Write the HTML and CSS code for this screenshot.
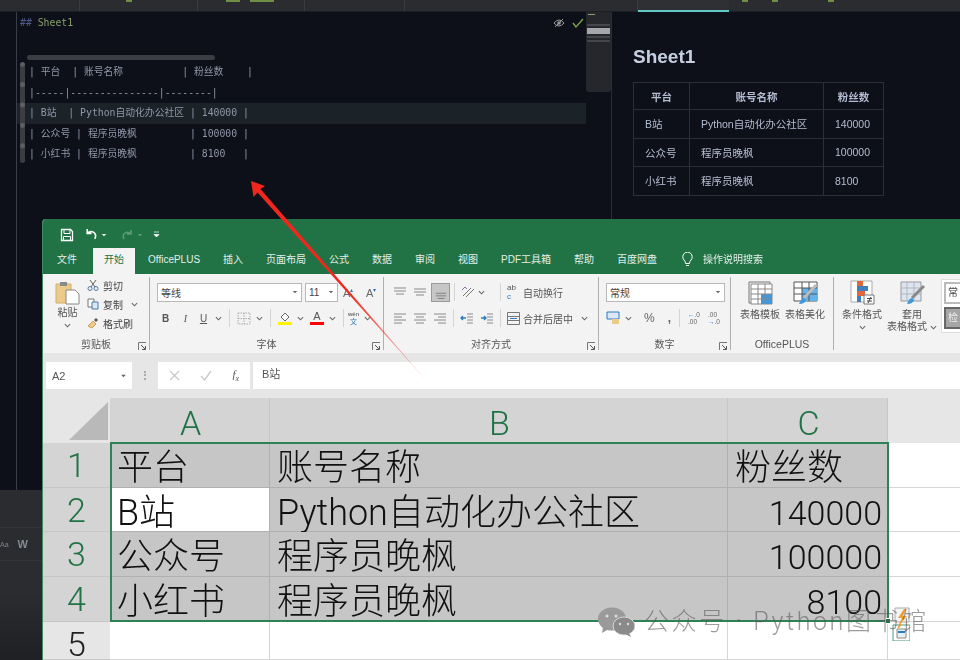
FILE: index.html
```html
<!DOCTYPE html>
<html lang="en">
<head>
  <meta charset="UTF-8">
  <meta name="viewport" content="width=device-width, initial-scale=1.0">
  <title>Sheet1</title>
  <link rel="stylesheet" href="styles.css">
</head>
<body>

  <!-- Icons used more than once -->
  <svg class="defs" width="0" height="0">
    <symbol id="chev" viewBox="0 0 8 5"><path d="M1 1l3 3 3-3" fill="none" stroke="#666" stroke-width="1.2"/></symbol>
    <symbol id="tri" viewBox="0 0 8 5"><path d="M1 1h6L4 4z" fill="#666"/></symbol>
    <symbol id="expand" viewBox="0 0 9 9"><path d="M.5 8V.5H8" fill="none" stroke="#777"/><path d="M3 3l4 4M7.5 4v3.5H4" fill="none" stroke="#555"/></symbol>
    <symbol id="al-left" viewBox="0 0 14 12"><path d="M1 2h12M1 5h8M1 8h12M1 11h8" stroke="#8a8a8a"/></symbol>
    <symbol id="al-mid" viewBox="0 0 14 12"><path d="M1 2h12M3 5h8M1 8h12M3 11h8" stroke="#8a8a8a"/></symbol>
    <symbol id="al-right" viewBox="0 0 14 12"><path d="M1 2h12M5 5h8M1 8h12M5 11h8" stroke="#8a8a8a"/></symbol>
  </svg>

  <!-- Dark editor behind the spreadsheet -->
  <div class="topbar">
    <div class="toptab t1"></div>
    <div class="toptab t2"><i class="gbit"></i></div>
    <div class="toptab t3"><i class="gbit wide"></i><i class="gbit wider"></i></div>
    <div class="toptab t4"></div>
    <div class="toptab t5"></div>
    <div class="toptab active"></div>
    <div class="toptab t7"><i class="gbit"></i><i class="gbit"></i><i class="gbit"></i></div>
  </div>

  <div class="panes">
    <div class="editor">
      <div class="gutter"></div>
      <div class="code">
        <pre class="line"><span class="hash">##</span> <span class="head">Sheet1</span></pre>
        <div class="tablebar"></div>
        <div class="sidebar"></div>
        <div class="mdtable">
          <pre class="line">| 平台  | 账号名称          | 粉丝数    |</pre>
          <pre class="line">|-----|---------------|--------|</pre>
          <pre class="line cur">| B站  | Python自动化办公社区 | 140000 |</pre>
          <pre class="line">| 公众号 | 程序员晚枫         | 100000 |</pre>
          <pre class="line">| 小红书 | 程序员晚枫         | 8100   |</pre>
        </div>
        <div class="tools">
          <svg width="12" height="10" viewBox="0 0 12 10"><path d="M1 5q5-6 10 0q-5 6-10 0z" fill="none" stroke="#9a9a9a"/><circle cx="6" cy="5" r="1.8" fill="#9a9a9a"/><path d="M2 9l8-8" stroke="#9a9a9a"/></svg>
          <svg width="12" height="10" viewBox="0 0 12 10"><path d="M1 5l3 4 7-8" fill="none" stroke="#7fa64c" stroke-width="1.3"/></svg>
        </div>
      </div>
      <div class="minimap">
        <i class="mm-green"></i><i></i><i class="mm-on"></i><i></i><i></i>
      </div>
    </div>

    <div class="preview">
      <h1>Sheet1</h1>
      <table>
        <tr><th>平台</th><th>账号名称</th><th>粉丝数</th></tr>
        <tr><td>B站</td><td>Python自动化办公社区</td><td>140000</td></tr>
        <tr><td>公众号</td><td>程序员晚枫</td><td>100000</td></tr>
        <tr><td>小红书</td><td>程序员晚枫</td><td>8100</td></tr>
      </table>
    </div>
  </div>

  <div class="bottompanel">
    <div class="findrow"><span class="aa">Aa</span><b>W</b></div>
  </div>

  <!-- Excel window, lies over the editor -->
  <div class="excel">
    <div class="titlebar">
      <svg width="14" height="14" viewBox="0 0 14 14"><path d="M1.5 1.5h9l2 2v9h-11z" fill="none" stroke="#fff" stroke-width="1.3"/><path d="M4 1.5h6v4H4zM3.5 8.5h7v4h-7z" fill="none" stroke="#fff"/></svg>
      <svg class="undo" width="14" height="13" viewBox="0 0 13 12"><path d="M3 1v4h4M3 5q3-3 6-1t1 6" fill="none" stroke="#fff" stroke-width="1.5"/></svg>
      <svg class="small" width="6" height="4" viewBox="0 0 8 5"><path d="M1 1h6L4 4z" fill="#fff"/></svg>
      <svg class="redo" width="13" height="12" viewBox="0 0 13 12"><path d="M10 1v4H6M10 5q-3-3-6-1t-1 6" fill="none" stroke="#5d9b7c" stroke-width="1.5"/></svg>
      <svg class="small" width="6" height="4" viewBox="0 0 8 5"><path d="M1 1h6L4 4z" fill="#5d9b7c"/></svg>
      <svg class="custom" width="7" height="7" viewBox="0 0 7 7"><path d="M1 1h5M1 3.5h5L3.5 6z" fill="#fff" stroke="#fff" stroke-width=".7"/></svg>
    </div>

    <div class="tabs">
      <span class="tab first">文件</span>
      <span class="tab on">开始</span>
      <span class="tab">OfficePLUS</span>
      <span class="tab">插入</span>
      <span class="tab">页面布局</span>
      <span class="tab">公式</span>
      <span class="tab">数据</span>
      <span class="tab">审阅</span>
      <span class="tab">视图</span>
      <span class="tab">PDF工具箱</span>
      <span class="tab">帮助</span>
      <span class="tab">百度网盘</span>
      <span class="tab search">
        <svg width="13" height="16" viewBox="0 0 13 16"><path d="M4.5 11.5Q4.5 9.5 3 8A4.7 4.7 0 1 1 10 8Q8.500 9.500 8.500 11.500zM5 13.500h3" fill="none" stroke="#fff"/></svg>
        操作说明搜索
      </span>
    </div>

    <div class="ribbon">
      <section class="grp g-clip">
        <div class="grp-body">
          <div class="bigbtn paste">
            <svg width="25" height="25" viewBox="0 0 25 25"><path d="M1 4h15v19H1z" fill="#eccb8a" stroke="#d3ad6c"/><path d="M5 2h7v4H5z" fill="#8a8a8a"/><path d="M11 10h9l4 4v10H11z" fill="#fff" stroke="#888"/></svg>
            <span>粘贴</span>
            <svg class="chev" width="7" height="5"><use href="#chev"/></svg>
          </div>
          <div class="clipcol">
            <div class="mini">
              <svg width="12" height="12" viewBox="0 0 12 12"><circle cx="3" cy="9.500" r="2" fill="none" stroke="#4a78b0"/><circle cx="9" cy="9.500" r="2" fill="none" stroke="#4a78b0"/><path d="M4 8l5-7M8 8L3 1" stroke="#666"/></svg>
              <span>剪切</span>
            </div>
            <div class="mini">
              <svg width="12" height="12" viewBox="0 0 12 12"><path d="M1 1h6v8H1z" fill="#fff" stroke="#777"/><path d="M5 4h6v7H5z" fill="#dbe8f5" stroke="#4a78b0"/></svg>
              <span>复制</span>
              <svg class="chev after" width="7" height="5"><use href="#chev"/></svg>
            </div>
            <div class="mini">
              <svg width="12" height="12" viewBox="0 0 12 12"><path d="M1 9l5-5 3 3-4 4z" fill="#eccb8a" stroke="#c99f58"/><path d="M7 3l2-2 2 2-2 2z" fill="#555"/></svg>
              <span>格式刷</span>
            </div>
          </div>
        </div>
        <div class="grp-label">剪贴板<svg class="expand" width="9" height="9"><use href="#expand"/></svg></div>
      </section>

      <section class="grp g-font">
        <div class="rows">
          <div class="row">
            <div class="combo fontname"><span>等线</span><svg width="6" height="4"><use href="#tri"/></svg></div>
            <div class="combo fontsize"><span>11</span><svg width="6" height="4"><use href="#tri"/></svg></div>
            <span class="grow">A<sup>▴</sup></span>
            <span class="grow second">A<sup>▾</sup></span>
          </div>
          <div class="row tools2">
            <b class="fmt">B</b>
            <i class="fmt it">I</i>
            <u class="fmt">U</u>
            <svg class="chev" width="7" height="5"><use href="#chev"/></svg>
            <span class="div"></span>
            <svg width="14" height="13" viewBox="0 0 14 13"><path d="M1 1h12v11H1zM7 1v11M1 6.500h12" fill="none" stroke="#aaa" stroke-dasharray="1.500 1"/></svg>
            <svg class="chev" width="7" height="5"><use href="#chev"/></svg>
            <span class="div"></span>
            <svg width="14" height="14" viewBox="0 0 14 14"><path d="M3 6l4-4 4 4-4 4z" fill="#fff" stroke="#666"/><path d="M0 11h14v3H0z" fill="#fff200"/></svg>
            <svg class="chev" width="7" height="5"><use href="#chev"/></svg>
            <span class="fcolor">A</span>
            <svg class="chev" width="7" height="5"><use href="#chev"/></svg>
            <span class="div"></span>
            <span class="wen">wén<em>文</em></span>
            <svg class="chev" width="7" height="5"><use href="#chev"/></svg>
          </div>
        </div>
        <div class="grp-label">字体<svg class="expand" width="9" height="9"><use href="#expand"/></svg></div>
      </section>

      <section class="grp g-align">
        <div class="rows">
          <div class="row">
            <svg width="14" height="10" viewBox="0 0 14 10"><path d="M1 1h12M1 4h12M3 7h8" stroke="#8a8a8a"/></svg>
            <svg width="14" height="10" viewBox="0 0 14 10"><path d="M1 2h12M1 5h12M3 8h8" stroke="#8a8a8a"/></svg>
            <span class="pressed"><svg width="12" height="10" viewBox="0 0 14 10"><path d="M1 3h12M1 6h12M3 9h8" stroke="#777"/></svg></span>
            <span class="div tight"></span>
            <svg width="14" height="12" viewBox="0 0 14 12"><path d="M2 10l8-8M5 11l8-8" stroke="#777"/><path d="M1 4l3-3 2 2" fill="none" stroke="#9a6aa8"/></svg>
            <svg class="chev near" width="7" height="5"><use href="#chev"/></svg>
            <span class="div far"></span>
            <span class="wrapico">ab<em>c</em></span>
            <span class="cmd">自动换行</span>
          </div>
          <div class="row">
            <svg width="14" height="12"><use href="#al-left"/></svg>
            <svg width="14" height="12"><use href="#al-mid"/></svg>
            <svg width="14" height="12"><use href="#al-right"/></svg>
            <span class="div"></span>
            <svg width="14" height="12" viewBox="0 0 14 12"><path d="M7 2h6M7 5h6M7 8h6M7 11h6" stroke="#8a8a8a"/><path d="M6 6H1m2-2L1 6l2 2" fill="none" stroke="#2b79c2" stroke-width="1.300"/></svg>
            <svg width="14" height="12" viewBox="0 0 14 12"><path d="M7 2h6M7 5h6M7 8h6M7 11h6" stroke="#8a8a8a"/><path d="M1 6h5M4 4l2 2-2 2" fill="none" stroke="#2b79c2" stroke-width="1.300"/></svg>
            <span class="div"></span>
            <svg width="13" height="13" viewBox="0 0 13 13"><path d="M.5.500h12v12H.5zM.5 4.500h12M.5 8.500h12" fill="none" stroke="#777"/><path d="M3 6.500h7" stroke="#2b79c2"/></svg>
            <span class="cmd">合并后居中</span>
            <svg class="chev" width="7" height="5"><use href="#chev"/></svg>
          </div>
        </div>
        <div class="grp-label">对齐方式<svg class="expand" width="9" height="9"><use href="#expand"/></svg></div>
      </section>

      <section class="grp g-num">
        <div class="rows">
          <div class="row">
            <div class="combo numfmt"><span>常规</span><svg width="6" height="4"><use href="#tri"/></svg></div>
          </div>
          <div class="row">
            <svg width="14" height="14" viewBox="0 0 14 14"><path d="M1 1h12v7H1z" fill="#dbe8f5" stroke="#2b79c2"/><path d="M6 8h7v5H6z" fill="#eccb8a"/></svg>
            <svg class="chev" width="7" height="5"><use href="#chev"/></svg>
            <span class="pct">%</span>
            <span class="comma">,</span>
            <span class="div"></span>
            <span class="dec"><em>←</em>.0<br>.00</span>
            <span class="dec">.00<br><em>→</em>.0</span>
          </div>
        </div>
        <div class="grp-label">数字<svg class="expand" width="9" height="9"><use href="#expand"/></svg></div>
      </section>

      <section class="grp g-plus">
        <div class="grp-body">
          <div class="bigbtn">
            <svg width="25" height="25" viewBox="0 0 25 25"><path d="M1 2h21v21H1z" fill="#f4f4f4" stroke="#777"/><path d="M3 4h21v20H3z" fill="#fff" stroke="#888"/><path d="M13 14h11v10H13z" fill="#3f97dd"/><path d="M3 9h21M3 14h21M3 19h21M10 4v20M17 4v20" stroke="#888" fill="none"/></svg>
            <span>表格模板</span>
          </div>
          <div class="bigbtn">
            <svg width="25" height="25" viewBox="0 0 25 25"><path d="M1 2h23v19H1z" fill="#fff" stroke="#555"/><path d="M9 8h15v13H9z" fill="#66b2ea"/><path d="M1 8h23M1 14h23M9 2v19M16 2v19" stroke="#555" fill="none"/><path d="M23 5L11 18" stroke="#bbb" stroke-width="3"/><path d="M11 18q-3 0-5 6q6 0 7-4z" fill="#3f97dd"/></svg>
            <span>表格美化</span>
          </div>
        </div>
        <div class="grp-label plain">OfficePLUS</div>
      </section>

      <section class="grp g-styles">
        <div class="grp-body">
          <div class="bigbtn">
            <svg width="25" height="25" viewBox="0 0 25 25"><path d="M1 1h21v21H1z" fill="#fff" stroke="#aaa"/><path d="M7 1h6v5H7z" fill="#e2683c"/><path d="M7 6h11v5H7z" fill="#3f7fc0"/><path d="M7 11h8v5H7z" fill="#e2683c"/><path d="M7 16h4v6H7z" fill="#3f7fc0"/><path d="M14 15h10v9H14z" fill="#fff" stroke="#777"/><path d="M17 18.500h5M17 21h5M21 17l-3 6" stroke="#444" fill="none"/></svg>
            <span>条件格式</span>
            <svg class="chev" width="7" height="5"><use href="#chev"/></svg>
          </div>
          <div class="bigbtn wide">
            <svg width="25" height="25" viewBox="0 0 25 25"><path d="M1 2h20v19H1z" fill="#dbe6f2" stroke="#999"/><path d="M1 8h20M1 14h20M7 2v19M14 2v19" stroke="#b5b5b5"/><path d="M24 6L12 18" stroke="#888" stroke-width="3"/><path d="M12 18q-3 0-5 6q6 0 7-4z" fill="#3f97dd"/></svg>
            <span>套用</span>
            <span class="line2">表格格式<svg class="chev" width="7" height="5"><use href="#chev"/></svg></span>
          </div>
          <div class="gallery">
            <span class="norm">常</span>
            <span class="chk">检</span>
          </div>
        </div>
      </section>
    </div>

    <div class="formula">
      <div class="namebox"><span>A2</span><svg width="7" height="4"><use href="#tri"/></svg></div>
      <span class="grip"></span>
      <div class="fxbox">
        <svg width="11" height="11" viewBox="0 0 11 11"><path d="M1 1l9 9M10 1l-9 9" stroke="#c8c8c8" stroke-width="1.300"/></svg>
        <svg width="12" height="11" viewBox="0 0 12 11"><path d="M1 6l3.500 4L11 1" fill="none" stroke="#c8c8c8" stroke-width="1.300"/></svg>
        <span class="fx">f<sub>x</sub></span>
      </div>
      <div class="input">B站</div>
    </div>

    <div class="sheet">
      <div class="corner"><i></i></div>
      <div class="col sel">A</div>
      <div class="col sel">B</div>
      <div class="col sel">C</div>
      <div class="col"></div>

      <div class="rownum sel">1</div>
      <div class="cell hit">平台</div>
      <div class="cell hit">账号名称</div>
      <div class="cell hit">粉丝数</div>
      <div class="cell"></div>

      <div class="rownum sel">2</div>
      <div class="cell hit active">B站</div>
      <div class="cell hit">Python自动化办公社区</div>
      <div class="cell hit num">140000</div>
      <div class="cell"></div>

      <div class="rownum sel">3</div>
      <div class="cell hit">公众号</div>
      <div class="cell hit">程序员晚枫</div>
      <div class="cell hit num">100000</div>
      <div class="cell"></div>

      <div class="rownum sel">4</div>
      <div class="cell hit">小红书</div>
      <div class="cell hit">程序员晚枫</div>
      <div class="cell hit num">8100</div>
      <div class="cell"></div>

      <div class="rownum">5</div>
      <div class="cell"></div>
      <div class="cell"></div>
      <div class="cell"></div>
      <div class="cell"></div>

      <div class="selection"><i></i></div>
      <div class="flash">
        <svg width="18" height="34" viewBox="0 0 18 34"><path d="M3 1h14v14H3z" fill="#f4f4f4" stroke="#aaa"/><path d="M12 2L6 11h4l-5 10 10-12h-4l3-7z" fill="#f0a030"/><path d="M1 18h17v16H1z" fill="#fff" stroke="#4f9a74"/><path d="M5 22h9v9H5z" fill="#e8eef5" stroke="#888"/><path d="M6 25h7" stroke="#2b79c2" stroke-width="2"/><path d="M6 21l3-4" stroke="#f0a030" stroke-width="1.500"/></svg>
      </div>
    </div>
  </div>

  <!-- Red arrow drawn over the picture -->
  <svg class="arrow" width="960" height="660" viewBox="0 0 960 660">
    <defs>
      <linearGradient id="fade" gradientUnits="userSpaceOnUse" x1="250" y1="181" x2="432" y2="387">
        <stop offset="0" stop-color="#f0271d"/>
        <stop offset=".55" stop-color="#f0271d"/>
        <stop offset="1" stop-color="#f0271d" stop-opacity="0"/>
      </linearGradient>
    </defs>
    <path d="M251 181l14 5-4.500 3 171.500 198-174.500-194.500-4 4.500z" fill="url(#fade)"/>
  </svg>

  <!-- Watermark -->
  <div class="mark">
    <svg width="37" height="30" viewBox="0 0 37 30"><ellipse cx="14" cy="12" rx="14" ry="11.500" fill="#9a9a9a"/><path d="M5 20l-1 6 7-4z" fill="#9a9a9a"/><ellipse cx="26" cy="19" rx="11" ry="9" fill="#8a8a8a" stroke="#d8d8d8"/><path d="M31 26l2 4-6-3z" fill="#8a8a8a"/><circle cx="9" cy="9" r="1.500" fill="#ddd"/><circle cx="18" cy="9" r="1.500" fill="#ddd"/><circle cx="22" cy="17" r="1.200" fill="#ddd"/><circle cx="30" cy="17" r="1.200" fill="#ddd"/></svg>
    <span>公众号 <b>·</b> Python图书馆</span>
  </div>

</body>
</html>
```

FILE: styles.css
```css
* {
  box-sizing: border-box;
}

body {
  margin: 0;
  width: 960px;
  height: 660px;
  overflow: hidden;
  position: relative;
  background: #0d1019;
  font-family: "Liberation Sans", "Noto Sans CJK SC", sans-serif;
  display: grid;
  grid-template-rows: 12px 478px 1fr;
}

.defs {
  position: absolute;
}

/* the source picture is a slightly soft screenshot */
.topbar, .panes, .bottompanel, .excel, .mark {
  filter: blur(.35px);
}

/* top bar of the editor */
.topbar {
  display: flex;
  background: #2a2c30;
  border-bottom: 1px solid #1d1f23;
}

.toptab {
  border-right: 1px solid #3a3c40;
  display: flex;
  gap: 10px;
  align-items: flex-start;
  justify-content: center;
}

.t1 { width: 80px; }
.t2 { width: 118px; padding-left: 46px; justify-content: flex-start; }
.t3 { width: 107px; padding-left: 28px; justify-content: flex-start; }
.t4 { width: 100px; }
.t5 { width: 233px; }

.t7 {
  width: 200px;
  gap: 24px;
  border: 0;
  padding-left: 13px;
  justify-content: flex-start;
}

.t7 .gbit:last-child { margin-left: 26px; }

.toptab.active {
  width: 91px;
  background: #2e3033;
  border: 0;
  border-bottom: 2px solid #62c9c6;
  height: 12px;
}

.gbit {
  width: 6px;
  height: 2px;
  background: #6f8f45;
}

.gbit.wide { width: 14px; }
.gbit.wider { width: 24px; }

/* editor and preview */
.panes {
  display: flex;
}

.editor {
  width: 612px;
  display: flex;
  border-right: 1px solid #2a2d33;
}

.gutter {
  width: 17px;
  flex: none;
  border-right: 1px solid #3b3e4a;
}

.code {
  flex: 1;
  position: relative;
  padding-top: 1px;
}

.line {
  margin: 0;
  height: 20.4px;
  line-height: 20.4px;
  padding-left: 12px;
  font-family: "DejaVu Sans Mono", "Noto Sans CJK SC", monospace;
  font-size: 9.8px;
  color: #8f96a8;
  white-space: pre;
}

.hash { color: #4f5a8a; padding-left: 2px; margin-left: -11px; }
.head { color: #86a06a; }

.mdtable {
  margin-top: 29px;
}

.line.cur {
  background: #1b2329;
}

.tablebar {
  position: absolute;
  left: 10px;
  top: 43px;
  width: 188px;
  height: 5px;
  border-radius: 3px;
  background: #3b3d43;
}

.sidebar {
  position: absolute;
  left: 3px;
  top: 50px;
  width: 5px;
  height: 101px;
  border-radius: 3px;
  background: radial-gradient(circle at center, #5c5e64 2px, transparent 3px) 0 -8px / 5px 20.4px, #3b3d43;
}

.tools {
  position: absolute;
  top: 6px;
  right: 2px;
  display: flex;
  gap: 7px;
}

.minimap {
  width: 25px;
  height: 80px;
  background: #25272d;
  border-radius: 0 0 3px 3px;
  padding-top: 2px;
  display: flex;
  flex-direction: column;
  align-items: center;
  gap: 2px;
}

.minimap i {
  width: 23px;
  height: 2px;
  background: #44464c;
}

.minimap .mm-green {
  width: 7px;
  height: 1px;
  margin: 0 auto 7px 2px;
  background: #86a06a;
}

.minimap .mm-on {
  background: #a4a6aa;
  height: 6px;
}

.preview {
  flex: 1;
  padding: 0 0 0 21px;
}

.preview h1 {
  margin: 33px 0 0;
  font-size: 19px;
  line-height: 23px;
  color: #c6cfe2;
}

.preview table {
  margin-top: 14px;
  width: 250px;
  border-collapse: collapse;
  table-layout: fixed;
  font-size: 10.500px;
  color: #b4bcd1;
}

.preview th, .preview td {
  border: 1px solid #2c2f36;
  height: 28.500px;
  padding: 0 11px;
  text-align: left;
  font-weight: normal;
}

.preview th {
  height: 27px;
  text-align: center;
  font-weight: bold;
  padding: 0;
}

.preview th:nth-child(1) { width: 56px; }
.preview th:nth-child(2) { width: 134px; }
.preview th:nth-child(3) { width: 60px; }

.bottompanel {
  background: linear-gradient(#2a2c2f 60%, #1f2023);
}

.findrow {
  margin-top: 37px;
  height: 34px;
  border-top: 1px solid #323438;
  border-bottom: 1px solid #323438;
  display: flex;
  align-items: center;
  gap: 9px;
  font-size: 9px;
  color: #7d828c;
}

.findrow b {
  font-size: 11px;
  color: #858a94;
}

.aa {
  font-size: 7px;
}

/* excel window */
.excel {
  position: absolute;
  left: 42px;
  top: 219px;
  right: 0;
  bottom: 0;
  display: flex;
  flex-direction: column;
  border-left: 1px solid #3f8a63;
  border-radius: 4px 0 0 0;
  overflow: hidden;
  background: #e6e6e6;
  color: #444;
}

.titlebar {
  height: 29px;
  background: #217346;
  display: flex;
  align-items: center;
  padding: 2px 0 0 17px;
}

.undo { margin-left: 10px; }
.small { margin-left: 3px; }
.redo { margin-left: 14px; }
.custom { margin-left: 10px; }

.tabs {
  height: 26px;
  background: #217346;
  display: flex;
  gap: 3px;
  padding-left: 4px;
  font-size: 10px;
  color: #e4efe9;
}

.tab {
  padding: 0 10px;
  line-height: 24px;
  white-space: nowrap;
}

.tab.first { margin-right: 3px; }

.tab.on {
  background: #f3f3f3;
  color: #217346;
  padding: 0 11px;
  line-height: 24px;
}

.tab.search {
  display: flex;
  align-items: center;
  gap: 9px;
  margin-left: 1px;
  height: 24px;
}

.ribbon {
  height: 79px;
  background: #f3f3f3;
  display: flex;
  font-size: 10px;
}

.grp {
  position: relative;
  display: flex;
  flex-direction: column;
  flex: none;
  border-right: 1px solid #b0b0b0;
  margin: 3px 0;
}

.g-clip { width: 107px; }
.g-font { width: 234px; }
.g-align { width: 215px; }
.g-num { width: 132px; }
.g-plus { width: 103px; }
.g-styles { flex: 1; border: 0; }

.grp-body {
  flex: 1;
  display: flex;
  align-items: flex-start;
}

.grp-label {
  height: 17px;
  line-height: 23px;
  text-align: center;
  font-size: 10px;
  color: #555;
  position: relative;
}

.grp-label.plain {
  font-size: 10.500px;
}

.expand {
  position: absolute;
  right: 2px;
  top: 9px;
}

.bigbtn {
  display: flex;
  flex-direction: column;
  align-items: center;
  line-height: 12px;
  white-space: nowrap;
  color: #555;
}

.bigbtn > svg:first-child {
  margin-bottom: 4px;
}

.bigbtn .line2 {
  display: flex;
  align-items: center;
  gap: 3px;
}

.chev {
  flex: none;
}

.bigbtn > .chev {
  margin-top: 4px;
}

.g-clip .grp-body {
  padding: 3px 0 0 14px;
}

.paste {
  width: 21px;
  align-items: center;
}

.paste > svg:first-child {
  margin-bottom: 2px;
}

.clipcol {
  margin: -1px 0 0 9px;
  display: flex;
  flex-direction: column;
  gap: 7px;
}

.mini {
  display: flex;
  align-items: center;
  gap: 4px;
  height: 12px;
}

.mini .after {
  margin-left: 4px;
}

.rows {
  flex: 1;
  display: flex;
  flex-direction: column;
  gap: 6px;
  padding: 5px 0 0 7px;
}

.row {
  display: flex;
  align-items: center;
  height: 20px;
  gap: 5px;
}

.combo {
  height: 19px;
  background: #fff;
  border: 1px solid #b8b8b8;
  display: flex;
  align-items: center;
  justify-content: space-between;
  padding: 0 3px;
  font-size: 10px;
}

.fontname { width: 145px; margin-right: -2px; }
.fontsize { width: 33px; }
.numfmt { width: 119px; }

.grow {
  font-size: 11px;
  color: #666;
  width: 14px;
}

.grow.second { margin-left: 4px; }

.grow sup {
  font-size: 6px;
  color: #2b79c2;
}

.tools2 {
  padding-left: 2px;
}

.fmt {
  width: 13px;
  font-size: 10px;
  font-style: normal;
  color: #555;
  text-align: center;
}

.fmt.it { font-style: italic; font-family: "Liberation Serif", serif; margin-left: 2px; }

.div {
  width: 1px;
  height: 18px;
  background: #d4d4d4;
  margin: 0 3px;
}

.tools2 .div {
  margin: 0 2px;
}

.fcolor {
  font-size: 11px;
  width: 14px;
  text-align: center;
  border-bottom: 3px solid #f00;
  line-height: 11px;
  color: #555;
  margin-left: 1px;
}

.wen {
  font-size: 6px;
  line-height: 7px;
  display: flex;
  flex-direction: column;
  align-items: center;
  margin-left: -3px;
}

.wen em {
  font-style: normal;
  color: #2b79c2;
  font-size: 7px;
}

.g-align .rows { padding-left: 9px; }
.g-align .row { gap: 6px; }
.g-align .div { margin: 0; }
.g-align .div.tight { margin-left: -2px; }
.g-align .div.far { margin-left: 9px; }
.g-align .near { margin-left: -3px; }

.pressed {
  width: 19px;
  height: 19px;
  margin-left: -2px;
  background: #c6c6c6;
  border: 1px solid #9a9a9a;
  display: flex;
  align-items: flex-end;
  justify-content: center;
  padding-bottom: 1px;
}

.wrapico {
  font-size: 8px;
  line-height: 9px;
  width: 13px;
  color: #555;
}

.wrapico em {
  display: block;
  font-style: normal;
  color: #2b79c2;
}

.cmd {
  font-size: 10px;
  color: #555;
  white-space: nowrap;
  margin-left: -3px;
}

.cmd + .chev {
  margin-left: 2px;
}

.pct {
  font-size: 12px;
  color: #666;
  margin-left: 7px;
}

.comma {
  font-size: 12px;
  font-weight: bold;
  color: #666;
  margin-left: 8px;
}

.dec {
  font-size: 6.500px;
  line-height: 7px;
  color: #666;
  width: 14px;
  margin-right: 1px;
}

.dec em {
  color: #2b79c2;
  font-style: normal;
}

.g-plus .grp-body {
  padding: 3px 0 0 9px;
  gap: 5px;
}

.g-styles .grp-body {
  padding: 3px 0 0 8px;
}

.g-styles .bigbtn:first-child {
  width: 40px;
}

.bigbtn.wide {
  width: 50px;
  margin-left: 5px;
}

.gallery {
  margin: -1px 0 0 4px;
  width: 30px;
  height: 54px;
  background: #fff;
  border: 1px solid #ddd;
  padding: 2px;
  display: flex;
  flex-direction: column;
  gap: 3px;
  font-size: 10px;
  overflow: hidden;
}

.gallery span {
  height: 22px;
  padding-left: 2px;
  line-height: 18px;
  border: 2px solid #bbb;
}

.gallery .chk {
  background: #a5a5a5;
  border-color: #666;
  color: #eee;
}

.formula {
  height: 45px;
  display: flex;
  align-items: flex-start;
  padding-top: 9px;
  font-size: 11px;
}

.namebox {
  margin-left: 3px;
  width: 86px;
  height: 27px;
  background: #fff;
  display: flex;
  align-items: center;
  justify-content: space-between;
  padding: 0 5px 0 6px;
  color: #555;
}

.grip {
  width: 2px;
  height: 9px;
  margin: 9px 12px 0;
  border-left: 2px dotted #aaa;
}

.fxbox {
  width: 92px;
  height: 27px;
  background: #fff;
  display: flex;
  align-items: center;
  justify-content: space-between;
  padding: 0 11px;
}

.fx {
  font-family: "Liberation Serif", serif;
  font-style: italic;
  color: #555;
}

.fx sub {
  font-size: 8px;
}

.input {
  flex: 1;
  margin-left: 3px;
  height: 27px;
  background: #fff;
  padding: 3px 0 0 9px;
  color: #555;
}

/* worksheet */
.sheet {
  flex: 1;
  position: relative;
  display: grid;
  grid-template-columns: 67px 160px 458px 160px 1fr;
  grid-template-rows: 45px 45px 44px 45px 45px 38px;
  background: #fff;
  font-size: 36px;
  font-weight: 300;
  line-height: 44px;
  color: #111;
  font-family: Roboto, "Noto Sans CJK SC", sans-serif;
}

.corner {
  background: #e6e6e6;
  padding: 4px 2px 3px 26px;
}

.corner i {
  display: block;
  height: 38px;
  background: #b9b9b9;
  clip-path: polygon(100% 0, 100% 100%, 0 100%);
}

.col, .rownum {
  background: #e6e6e6;
  color: #222;
  text-align: center;
  font-size: 34px;
}

.col {
  padding: 3px 0 0 2px;
  border-right: 1px solid #c6c6c6;
}

.col:nth-child(5) {
  border-right: 0;
}

.rownum {
  border-bottom: 1px solid #c6c6c6;
}

.col.sel, .rownum.sel {
  background: #d4d4d4;
  color: #217346;
}

.cell {
  border-right: 1px solid #d6d6d6;
  border-bottom: 1px solid #d6d6d6;
  padding: 3px 6px 0 7px;
  white-space: nowrap;
}

.cell:nth-child(5n) {
  border-right: 0;
}

.cell.hit {
  background: #c6c6c6;
  border-color: #b0b0b0;
}

.cell.active {
  background: #fff;
}

.cell.num {
  font-size: 34px;
  text-align: right;
  padding-right: 5px;
}

.selection {
  position: absolute;
  left: 67px;
  top: 44px;
  width: 779px;
  height: 180px;
  border: 2px solid #2f8158;
  pointer-events: none;
}

.selection i {
  position: absolute;
  right: -4px;
  bottom: -4px;
  width: 6px;
  height: 6px;
  background: #217346;
  border: 1px solid #fff;
}

.flash {
  position: absolute;
  left: 849px;
  top: 209px;
  line-height: 0;
}

/* overlays */
.arrow {
  position: absolute;
  left: 0;
  top: 0;
}

.mark {
  position: absolute;
  left: 598px;
  top: 606px;
  display: flex;
  align-items: center;
  gap: 9px;
  font-family: Roboto, "Noto Sans CJK SC", sans-serif;
  font-size: 25px;
  font-weight: 300;
  letter-spacing: 2.6px;
  line-height: 32px;
  color: rgba(90, 90, 90, .6);
  white-space: nowrap;
}
```
